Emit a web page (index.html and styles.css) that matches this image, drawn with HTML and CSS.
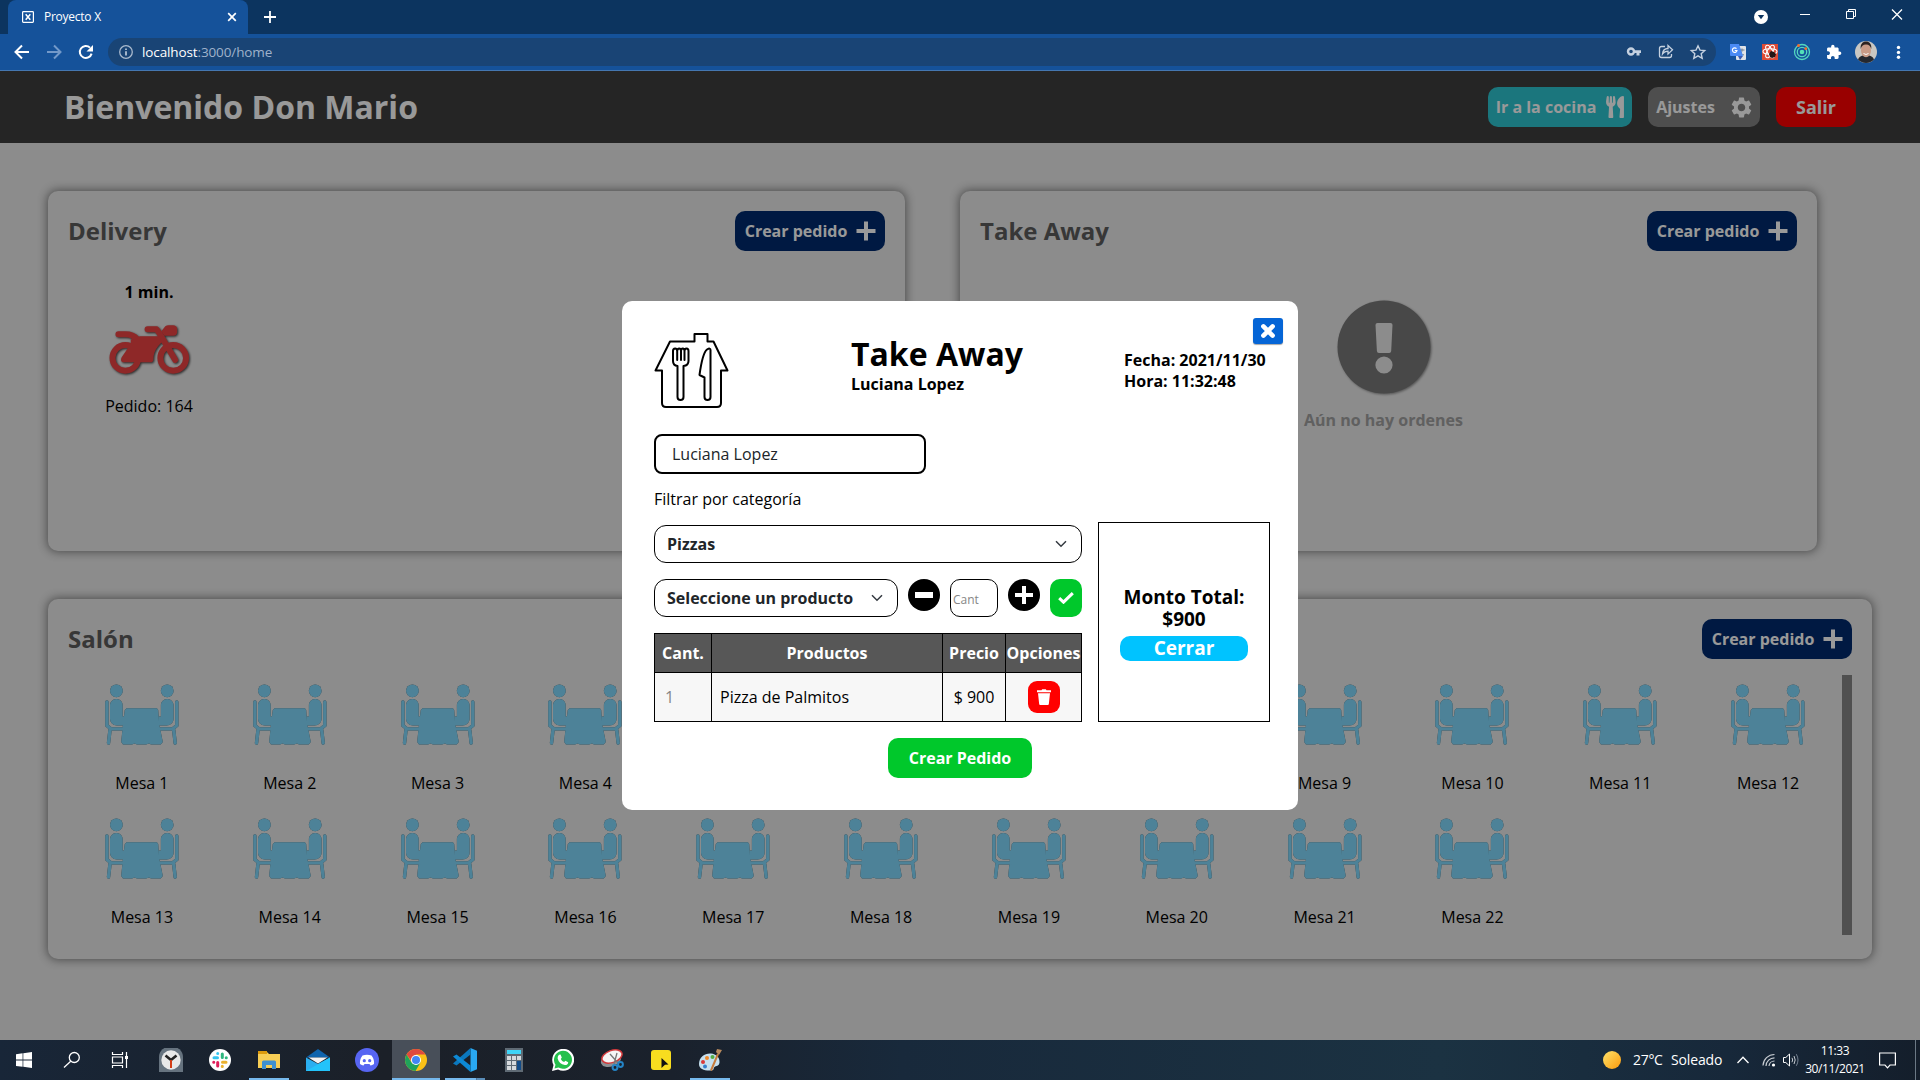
FILE: index.html
```html
<!DOCTYPE html>
<html lang="es">
<head>
<meta charset="utf-8">
<title>Proyecto X</title>
<link rel="stylesheet" href="styles.css">
</head>
<body>
<svg class="defs" width="0" height="0" aria-hidden="true">
  <symbol id="mesa" viewBox="0 0 74 62">
    <circle cx="11.4" cy="6.8" r="6.4"/><circle cx="62.2" cy="6.8" r="6.4"/>
    <path d="M11.4 15c-4 0-6.4 3-6.4 6.500v13c0 4 3 7 7 7h8v-9h-2.300V21.500c0-3.500-2.300-6.500-6.300-6.500zM62.200 15c4 0 6.400 3 6.400 6.500v13c0 4-3 7-7 7h-8v-9h2.300V21.500c0-3.500 2.300-6.500 6.300-6.500z"/>
    <path d="M21.500 24.300h30.400l1.300 1.700 1 14 3.600 18-2 2.500H46l-2-1-3 1h-9l-2.500-1-2.500 1h-9l-1.800-2.500 1.800-18 1.800-14z"/>
    <path class="chair" d="M1.900 18v23.500l4 3.400h12M5 46l-1.500 13M71.800 18v23.500l-4 3.400h-12M68.700 46l1.500 13"/>
  </symbol>
  <symbol id="mas" viewBox="0 0 20 20"><path d="M8 .5h4V8h7.500v4H12v7.500H8V12H.5V8H8z"/></symbol>
</svg>

<header class="browser">
  <div class="tabstrip">
    <div class="tab">
      <svg width="12" height="12" viewBox="0 0 12 12" fill="none" stroke="#fff"><rect x=".6" y=".6" width="10.800" height="10.800" rx=".8" stroke-width="1.200"/><path d="M3.700 3.200l4.600 5.600M8.300 3.200L3.700 8.800" stroke-width="1.500"/></svg>
      <span>Proyecto X</span>
      <svg width="10" height="10" viewBox="0 0 10 10" stroke="#fff" stroke-width="1.700"><path d="M1.200 1.200l7.600 7.600M8.800 1.200L1.200 8.800"/></svg>
    </div>
    <svg class="newtab" width="12" height="12" viewBox="0 0 12 12" stroke="#fff" stroke-width="1.800"><path d="M6 0v12M0 6h12"/></svg>
    <div class="wincontrols">
      <svg class="drop" width="14" height="14" viewBox="0 0 14 14"><circle cx="7" cy="7" r="7" fill="#fff"/><path d="M3.800 5h6.400L7 9.200z" fill="#0c345f"/></svg>
      <svg width="46" height="28" viewBox="0 0 46 28" stroke="#fff"><path d="M18 14.500h10"/></svg>
      <svg width="46" height="28" viewBox="0 0 46 28" stroke="#fff" fill="none"><path d="M18.500 11.500h7v7h-7zM20.500 11.500v-2h7v7h-2"/></svg>
      <svg width="46" height="28" viewBox="0 0 46 28" stroke="#fff" stroke-width="1.300"><path d="M18 9.500l10 10M28 9.500l-10 10"/></svg>
    </div>
  </div>
  <div class="toolbar">
    <div class="nav">
      <svg width="32" height="32" viewBox="0 0 32 32" fill="none" stroke="#fff" stroke-width="2"><path d="M23 16H10M16 9.500L9.500 16l6.500 6.500"/></svg>
      <svg width="32" height="32" viewBox="0 0 32 32" fill="none" stroke="#7399c9" stroke-width="2"><path d="M9 16h13M16 9.500l6.500 6.500-6.500 6.500"/></svg>
      <svg width="32" height="32" viewBox="0 0 32 32"><path d="M20 11.600a6 6 0 1 0 1.600 6" fill="none" stroke="#fff" stroke-width="2"/><path d="M23 9v6.500h-6.500z" fill="#fff"/></svg>
    </div>
    <div class="omnibox">
      <svg width="14" height="14" viewBox="0 0 14 14"><circle cx="7" cy="7" r="6.300" fill="none" stroke="#a9b9cd" stroke-width="1.300"/><path d="M6.200 6.200h1.600v4.300H6.200zM6.200 3.500h1.600v1.500H6.200z" fill="#c5d1e0"/></svg>
      <span class="url"><b>localhost</b>:3000/home</span>
      <div class="omniacts">
        <svg width="32" height="28" viewBox="0 0 32 28"><circle cx="13" cy="13.500" r="3" fill="none" stroke="#c5d1e0" stroke-width="2.400"/><path d="M16 12.200h7v2.800h-1.500v2.500h-3V15H16z" fill="#c5d1e0"/></svg>
        <svg width="32" height="28" viewBox="0 0 32 28" fill="none" stroke="#c5d1e0" stroke-width="1.300"><path d="M15 8.500h-3.500a2 2 0 0 0-2 2v7a2 2 0 0 0 2 2h8a2 2 0 0 0 2-2V16M12.500 16c.3-3.500 2.500-5.400 5.500-5.500V7.500l4.500 4.300-4.500 4.300v-3c-2.500 0-4 .7-5.500 2.900z"/></svg>
        <svg width="32" height="28" viewBox="0 0 32 28" fill="none" stroke="#c5d1e0" stroke-width="1.400"><path d="M16 7.800l2 4.300 4.700.5-3.500 3.100 1 4.600-4.200-2.400-4.200 2.400 1-4.600-3.500-3.100 4.700-.5z"/></svg>
      </div>
    </div>
    <div class="exts">
      <svg width="32" height="32" viewBox="0 0 32 32"><rect x="14" y="10" width="10" height="14" rx="1" fill="#dfe3e8"/><path d="M17.500 14h5M20 12.500V14c0 2-1 4-3 5M18 15.500c.5 1.500 2 3 4 3.500" stroke="#6b7d8e" fill="none"/><path d="M8 8h9l4 12H9a1 1 0 0 1-1-1z" fill="#4a8af4"/><path d="M16 20h5l-3 4z" fill="#3a5bb5"/><path d="M14.500 12.600a2.300 2.300 0 1 0 .5 1.900h-2.300" fill="none" stroke="#fff" stroke-width="1.200"/></svg>
      <svg width="32" height="32" viewBox="0 0 32 32"><rect x="8" y="8" width="16" height="16" fill="#de4b36"/><g fill="none" stroke="#fff" stroke-width="1.100"><ellipse cx="16" cy="15.500" rx="7" ry="2.700"/><ellipse cx="16" cy="15.500" rx="7" ry="2.700" transform="rotate(60 16 15.500)"/><ellipse cx="16" cy="15.500" rx="7" ry="2.700" transform="rotate(120 16 15.500)"/></g><path d="M15 18l2-3 3 1 2 2-1 3-3 1-2-1z" fill="#241515"/></svg>
      <svg width="32" height="32" viewBox="0 0 32 32" fill="none" stroke="#53d6c0" stroke-width="1.300"><circle cx="16" cy="16" r="7.500"/><circle cx="16" cy="16" r="4.700"/><circle cx="16" cy="16" r="2.300" fill="#53e0b8" stroke="none"/><circle cx="12.500" cy="9.500" r="1.500" fill="#f26b2c" stroke="none"/><circle cx="19.800" cy="12.700" r="1.400" fill="#f26b2c" stroke="none"/></svg>
      <svg width="32" height="32" viewBox="0 0 32 32"><path transform="translate(7.700 8) scale(.68)" fill="#fff" d="M20.500 11H19V7c0-1.100-.9-2-2-2h-4V3.500a2.500 2.500 0 0 0-5 0V5H4c-1.100 0-1.990.9-1.990 2v3.800H3.500c1.490 0 2.700 1.210 2.700 2.700s-1.210 2.700-2.700 2.700H2V20c0 1.100.9 2 2 2h3.800v-1.500c0-1.490 1.210-2.700 2.700-2.700s2.700 1.210 2.700 2.700V22H17c1.100 0 2-.9 2-2v-4h1.500a2.500 2.500 0 0 0 0-5z"/></svg>
      <svg width="32" height="32" viewBox="0 0 32 32"><circle cx="16" cy="16" r="11" fill="#c9c7c2"/><path d="M8 23.500c1-3 4-4.500 8-4.500s7 1.500 8 4.500a11 11 0 0 1-16 0z" fill="#25282e"/><ellipse cx="16" cy="14.500" rx="5" ry="6.800" fill="#c99b86"/><path d="M10.800 13c-.8-5 2-7.500 5.200-7.500s6 2.500 5.200 7.500c-.8-3-2-4.500-5.200-4.500s-4.400 1.500-5.200 4.500z" fill="#2c221f"/><path d="M13.500 17.500q2.500 2 5 0" stroke="#fff" fill="none"/></svg>
      <svg width="32" height="32" viewBox="0 0 32 32" fill="#fff"><circle cx="16.500" cy="11.400" r="1.700"/><circle cx="16.500" cy="16.400" r="1.700"/><circle cx="16.500" cy="21.300" r="1.700"/></svg>
    </div>
  </div>
</header>

<main class="page">
  <div class="topbar">
    <h1>Bienvenido Don Mario</h1>
    <button class="btn cocina"><span>Ir a la cocina</span><svg width="18" height="22" viewBox="0 0 416 512" fill="#fff"><path d="M207.900 15.200c.8 4.700 16.100 94.500 16.100 128.800 0 52.300-27.800 89.600-68.900 104.600L168 486.700c.7 13.700-10.200 25.300-24 25.300H80c-13.700 0-24.700-11.500-24-25.300l12.900-238.100C27.700 233.600 0 196.200 0 144 0 109.600 15.300 19.900 16.100 15.200 19.300-5.100 61.400-5.400 64 16.300v141.200c1.300 3.400 15.100 3.200 16 0 1.400-25.300 7.900-139.200 8-141.800 3.300-20.800 44.700-20.800 47.900 0 .2 2.700 6.600 116.500 8 141.800.9 3.200 14.800 3.400 16 0V16.300c2.600-21.600 44.800-21.400 48-1.100zm119.200 285.700l-15 185.100c-1.200 14 9.900 26 23.900 26h56c13.300 0 24-10.700 24-24V24c0-13.200-10.700-24-24-24-82.500 0-221.400 178.500-64.900 300.900z"/></svg></button>
    <button class="btn ajustes"><span>Ajustes</span><svg width="25" height="25" viewBox="0 0 24 24" fill="#fff"><path d="M19.140 12.940c.04-.3.060-.61.060-.94 0-.32-.02-.64-.07-.94l2.030-1.580a.49.49 0 0 0 .12-.61l-1.920-3.320a.488.488 0 0 0-.59-.22l-2.390.96c-.5-.38-1.030-.7-1.620-.94l-.36-2.540a.484.484 0 0 0-.48-.41h-3.840c-.24 0-.43.17-.47.41l-.36 2.540c-.59.24-1.130.57-1.620.94l-2.390-.96c-.22-.08-.47 0-.59.22L2.740 8.870c-.12.21-.08.47.12.61l2.030 1.580c-.05.3-.09.63-.09.94s.02.64.07.94l-2.030 1.580a.49.49 0 0 0-.12.61l1.920 3.320c.12.22.37.29.59.22l2.390-.96c.5.38 1.030.7 1.620.94l.36 2.540c.05.24.24.41.48.41h3.840c.24 0 .44-.17.47-.41l.36-2.540c.59-.24 1.130-.56 1.620-.94l2.390.96c.22.08.47 0 .59-.22l1.920-3.320c.12-.22.07-.47-.12-.61l-2.010-1.580zM12 15.600c-1.980 0-3.600-1.620-3.600-3.600s1.620-3.600 3.600-3.600 3.600 1.620 3.600 3.600-1.620 3.600-3.600 3.600z"/></svg></button>
    <button class="btn salir">Salir</button>
  </div>

  <div class="content">
    <div class="pair">
      <section class="card">
        <div class="cardhead"><h2>Delivery</h2><button class="btn crear"><span>Crear pedido</span><svg width="20" height="20"><use href="#mas"/></svg></button></div>
        <div class="orders">
          <div class="order">
            <strong>1 min.</strong>
            <svg class="moto" width="81" height="50" viewBox="0 0 82 50">
              <g fill="none" stroke="#ed4344" stroke-width="6"><circle cx="16.500" cy="33" r="13"/><circle cx="65" cy="33" r="13"/><path d="M9.500 9h7c6 0 9 1.500 12 5M39 4h9l3 4 16 27" stroke-linecap="round" stroke-linejoin="round"/></g>
              <path fill="#ed4344" d="M22 14h5l4-3h20l3 6c-5 4-9 10-9 17 0 2-1 3.500-3 3.500H15c-3 0-3.500-3-2-5.500l9-13zM53 6l4-5c1-.8 2-1 3-1h5c2 0 4 1.500 4 3.500V7c0 2-1.500 3.500-4 3.500h-9z"/>
            </svg>
            <span>Pedido: 164</span>
          </div>
        </div>
      </section>
      <section class="card">
        <div class="cardhead"><h2>Take Away</h2><button class="btn crear"><span>Crear pedido</span><svg width="20" height="20"><use href="#mas"/></svg></button></div>
        <div class="empty">
          <svg width="94" height="94" viewBox="0 0 94 94"><circle cx="47" cy="47" r="46.500" fill="#787878"/><path d="M40.500 23h13q2 0 2 2l-1.300 26q-.2 2-2 2H42q-2 0-2.100-2l-1.400-26q0-2 2-2z" fill="#e9e9e9"/><circle cx="47" cy="65" r="8.600" fill="#e9e9e9"/></svg>
          <strong>Aún no hay ordenes</strong>
        </div>
      </section>
    </div>
    <section class="card salon">
      <div class="cardhead"><h2>Salón</h2><button class="btn crear"><span>Crear pedido</span><svg width="20" height="20"><use href="#mas"/></svg></button></div>
      <div class="scroller">
        <div class="mesas">
          <div class="mesa"><svg><use href="#mesa"/></svg><span>Mesa 1</span></div>
          <div class="mesa"><svg><use href="#mesa"/></svg><span>Mesa 2</span></div>
          <div class="mesa"><svg><use href="#mesa"/></svg><span>Mesa 3</span></div>
          <div class="mesa"><svg><use href="#mesa"/></svg><span>Mesa 4</span></div>
          <div class="mesa"><svg><use href="#mesa"/></svg><span>Mesa 5</span></div>
          <div class="mesa"><svg><use href="#mesa"/></svg><span>Mesa 6</span></div>
          <div class="mesa"><svg><use href="#mesa"/></svg><span>Mesa 7</span></div>
          <div class="mesa"><svg><use href="#mesa"/></svg><span>Mesa 8</span></div>
          <div class="mesa"><svg><use href="#mesa"/></svg><span>Mesa 9</span></div>
          <div class="mesa"><svg><use href="#mesa"/></svg><span>Mesa 10</span></div>
          <div class="mesa"><svg><use href="#mesa"/></svg><span>Mesa 11</span></div>
          <div class="mesa"><svg><use href="#mesa"/></svg><span>Mesa 12</span></div>
          <div class="mesa"><svg><use href="#mesa"/></svg><span>Mesa 13</span></div>
          <div class="mesa"><svg><use href="#mesa"/></svg><span>Mesa 14</span></div>
          <div class="mesa"><svg><use href="#mesa"/></svg><span>Mesa 15</span></div>
          <div class="mesa"><svg><use href="#mesa"/></svg><span>Mesa 16</span></div>
          <div class="mesa"><svg><use href="#mesa"/></svg><span>Mesa 17</span></div>
          <div class="mesa"><svg><use href="#mesa"/></svg><span>Mesa 18</span></div>
          <div class="mesa"><svg><use href="#mesa"/></svg><span>Mesa 19</span></div>
          <div class="mesa"><svg><use href="#mesa"/></svg><span>Mesa 20</span></div>
          <div class="mesa"><svg><use href="#mesa"/></svg><span>Mesa 21</span></div>
          <div class="mesa"><svg><use href="#mesa"/></svg><span>Mesa 22</span></div>
        </div>
        <div class="track"></div>
      </div>
    </section>
  </div>

  <div class="overlay">
    <div class="modal">
      <button class="close"><svg width="16" height="16" viewBox="0 0 16 16" stroke="#fff" stroke-width="4.600" stroke-linecap="round"><path d="M3.400 3.400l9.200 9.200M12.600 3.400l-9.200 9.200"/></svg></button>
      <div class="mhead">
        <svg width="75" height="75" viewBox="0 0 75 75" fill="none" stroke="#000" stroke-width="2" stroke-linejoin="round"><path d="M1.500 37.500L16 8.500h24.500V1h13v7.500h6l14 29H67V70q0 4-4 4H12q-4 0-4-4V37.500z"/><path d="M23.500 33v31q0 3 3 3t3-3V33q5-.5 5-5V18q0-2.500-2-2.500T30.500 18v9-9q0-2.500-1.700-2.500T27 18v9-9q0-2.500-1.800-2.500T23.200 18v9-9q0-2.500-2.100-2.500T19 18v10q0 4.500 4.500 5zM56.500 17v47q0 3-3 3t-3-3V44.500L45.500 42q3-22 7.500-25.500 3.500-2 3.500.5z"/></svg>
        <div class="mtitle"><h3>Take Away</h3><strong>Luciana Lopez</strong></div>
        <div class="meta"><div>Fecha: 2021/11/30</div><div>Hora: 11:32:48</div></div>
      </div>
      <div class="nameinput">Luciana Lopez</div>
      <div class="label">Filtrar por categoría</div>
      <div class="mbody">
        <div class="left">
          <div class="select"><span>Pizzas</span><svg width="12" height="8" viewBox="0 0 12 8"><path d="M1 1.200l5 5 5-5"/></svg></div>
          <div class="row">
            <div class="select prod"><span>Seleccione un producto</span><svg width="12" height="8" viewBox="0 0 12 8"><path d="M1 1.200l5 5 5-5"/></svg></div>
            <svg class="circ" width="32" height="32" viewBox="0 0 32 32"><circle cx="16" cy="16" r="16"/><path d="M7 13h18v6H7z" fill="#fff"/></svg>
            <div class="cant">Cant</div>
            <svg class="circ" width="32" height="32" viewBox="0 0 32 32"><circle cx="16" cy="16" r="16"/><path d="M14 7h4v7h7v4h-7v7h-4v-7H7v-4h7z" fill="#fff"/></svg>
            <button class="ok"><svg width="16" height="12" viewBox="0 0 16 12" fill="none" stroke="#fff" stroke-width="3"><path d="M1.200 6.200l4.300 4L14.800 1.200"/></svg></button>
          </div>
          <table>
            <thead><tr><th class="c1">Cant.</th><th class="c2">Productos</th><th class="c3">Precio</th><th class="c4">Opciones</th></tr></thead>
            <tbody><tr><td class="qty">1</td><td>Pizza de Palmitos</td><td class="price">$ 900</td><td class="opt"><button class="del"><svg width="14" height="16" viewBox="0 0 14 16" fill="#fff"><path d="M0 1.300h4.500L5.200.2h3.600l.7 1.100H14v1.900H0zM1 4.200h12l-1.200 11q-.1.800-1 .8H3.200q-.9 0-1-.8z"/></svg></button></td></tr></tbody>
          </table>
        </div>
        <div class="total"><div>Monto Total:</div><div>$900</div><button>Cerrar</button></div>
      </div>
      <button class="btn submit">Crear Pedido</button>
    </div>
  </div>
</main>

<footer class="taskbar">
  <div class="apps">
    <div class="app"><svg width="16" height="16" viewBox="0 0 16 16" fill="#fff"><path d="M0 2.200L6.600 1.300v6.300H0zM7.300 1.200L16 0v7.600H7.300zM0 8.400h6.600v6.400L0 13.900zM7.300 8.400H16V16l-8.700-1.200z"/></svg></div>
    <div class="app search"><svg width="18" height="18" viewBox="0 0 18 18" fill="none" stroke="#fff" stroke-width="1.300"><circle cx="11.300" cy="6.500" r="5"/><path d="M7.700 10.300L1 16.500"/></svg></div>
    <div class="app views"><svg width="18" height="16" viewBox="0 0 18 16" fill="none" stroke="#fff" stroke-width="1.200"><path d="M1.500 0v2.500h10V0M1.500 16v-2.500h10V16M1.500 5h10v6h-10zM15.500 0v16"/><path d="M14 4h3v3h-3z" fill="#fff" stroke="none"/></svg></div>
    <div class="app"><svg width="24" height="24" viewBox="0 0 24 24"><path d="M0 9A10 9 0 0 1 24 9V24H0z" fill="#66737f"/><circle cx="12" cy="12" r="9.700" fill="#e8e8e8"/><path d="M12 12L6.500 7.500M12 12l5.500-4.500" stroke="#222" stroke-width="2.600"/><path d="M12 12v8" stroke="#d43d16" stroke-width="2"/></svg></div>
    <div class="app"><svg width="22" height="22" viewBox="0 0 22 22"><circle cx="11" cy="11" r="11" fill="#fff"/><g stroke-width="3" stroke-linecap="round"><path d="M5 8.700h3.500M8.700 4.500v.1" stroke="#36c5f0"/><path d="M13.300 5v3.500M17.200 8.700h.1" stroke="#2eb67d"/><path d="M13.500 13.300H17M13.300 17.300v.1" stroke="#ecb22e"/><path d="M8.700 13.500V17M4.700 13.300h.1" stroke="#e01e5a"/></g></svg></div>
    <div class="app run"><svg width="22" height="20" viewBox="0 0 22 20"><path d="M0 2h9l2 2h11v14H0z" fill="#f8ce55"/><path d="M0 1h9v3H0z" fill="#dd9b0d"/><path d="M4 19v-7q0-1.500 1.500-1.500h11Q18 10.500 18 12v7h-4v-4H8v4z" fill="#3f90d0"/></svg></div>
    <div class="app"><svg width="24" height="22" viewBox="0 0 24 22"><path d="M0 8.500L12 0l12 8.500z" fill="#0f64ad"/><path d="M0 8.500L12 15l12-6.500V22H0z" fill="#2aaef0"/><path d="M0 22L24 8.500V22z" fill="#23c3fa"/><path d="M2.500 8.500h19L12 14.500z" fill="#f2f2f2"/></svg></div>
    <div class="app"><svg width="24" height="24" viewBox="0 0 24 24"><circle cx="12" cy="12" r="12" fill="#5765f2"/><path d="M7.500 7.500q4.500-1.500 9 0 3 4 2.500 8.500-2 1.500-3.500 1.400l-1-1.400h-5l-1 1.400Q7 17.500 5 16q-.5-4.500 2.500-8.500z" fill="#fff"/><circle cx="9.300" cy="12.700" r="1.600" fill="#5765f2"/><circle cx="14.700" cy="12.700" r="1.600" fill="#5765f2"/></svg></div>
    <div class="app active"><svg width="22" height="22" viewBox="0 0 22 22"><circle cx="11" cy="11" r="11" fill="#fbc116"/><path d="M1.500 5.500A11 11 0 0 1 20.500 5.500H11L7 13z" fill="#e04a3f"/><path d="M1.500 5.500A11 11 0 0 0 10.500 22l5-8.500H6.500z" fill="#20a35b"/><circle cx="11" cy="11" r="5" fill="#fff"/><circle cx="11" cy="11" r="4" fill="#4286f5"/></svg></div>
    <div class="app run multi"><svg width="24" height="24" viewBox="0 0 24 24"><path d="M17.500 0L24 2.700v18.600L17.500 24z" fill="#29a8f2"/><path d="M17.500 0v6.500L3.500 17.500 0 15.500z" fill="#0b78be"/><path d="M0 8.500l3.500-2 14 11V24z" fill="#0d89d5"/></svg></div>
    <div class="app"><svg width="18" height="24" viewBox="0 0 18 24"><path d="M0 0h18v24H0z" fill="#5f6a74"/><path d="M2 2h14v4H2z" fill="#3fd5f7"/><path d="M2 8h4v4H2zM7 8h4v4H7zM12 8h4v4h-4zM2 13h4v4H2zM7 13h4v4H7zM2 18h4v4H2zM7 18h4v4H7z" fill="#d6dadd"/><path d="M12 13h4v9h-4z" fill="#124b87"/></svg></div>
    <div class="app"><svg width="22" height="22" viewBox="0 0 22 22"><path d="M0 22l1.500-6A11 11 0 1 1 6 20.500z" fill="#fff"/><path d="M2.500 19.500l1-3.700A9 9 0 1 1 6.500 18.600z" fill="#25c04c"/><path d="M7 5.800l1.500-.2 1.300 3-1 1.300q1 2.200 3.300 3.200l1.300-1.300 2.800 1.400q0 2.800-3.300 2.800-6-1-7.300-6.800 0-2.300 1.400-3.400z" fill="#fff"/></svg></div>
    <div class="app"><svg width="24" height="22" viewBox="0 0 24 22"><ellipse cx="11" cy="11" rx="10.500" ry="6.500" transform="rotate(-20 11 11)" fill="#8b8f93"/><ellipse cx="12" cy="7.500" rx="10.500" ry="6" transform="rotate(-20 12 7.500)" fill="#f5f5f5" stroke="#d2393b" stroke-width="1.500"/><path d="M10 5l8 9M17 4l-3 11" stroke="#777" stroke-width="1.300"/><g fill="none" stroke="#2484c6" stroke-width="2"><circle cx="15" cy="18.500" r="2.400"/><circle cx="20.500" cy="15.500" r="2.400"/></g></svg></div>
    <div class="app"><svg width="20" height="20" viewBox="0 0 20 20"><rect width="20" height="20" rx="3" fill="#f8dd1f"/><path d="M10.500 8l7 6.500-3.500.3-3.500 3.200z" fill="#111"/></svg></div>
    <div class="app run"><svg width="24" height="24" viewBox="0 0 24 24"><path d="M1 16C1 9 7 5 13 5.500c5 .5 9 4 8.500 9-.5 4-3.500 3-5 4.500s0 3-3 3.500C7 23 1 21.500 1 16z" fill="#c6e0ef"/><circle cx="5" cy="14" r="2" fill="#d93838"/><circle cx="9" cy="10" r="2" fill="#f08a2c"/><circle cx="14.500" cy="9" r="2" fill="#54ad45"/><circle cx="7" cy="18.500" r="2" fill="#377fcc"/><path d="M13 22.500L20 6" stroke="#c77b3b" stroke-width="2"/><path d="M18 4l1-3 5 1-3 5z" fill="#b98a5e"/></svg></div>
  </div>
  <div class="tray">
    <svg class="sun" width="18" height="18" viewBox="0 0 18 18"><defs><linearGradient id="g" x1="0" y1="0" x2="1" y2="1"><stop offset="0" stop-color="#ffe36b"/><stop offset="1" stop-color="#fb9a0b"/></linearGradient></defs><circle cx="9" cy="9" r="9" fill="url(#g)"/></svg>
    <span class="temp">27°C</span><span class="weather">Soleado</span>
    <svg width="12" height="8" viewBox="0 0 12 8" fill="none" stroke="#fff" stroke-width="1.300"><path d="M.5 7L6 1.200 11.500 7"/></svg>
    <svg class="wifi" width="14" height="14" viewBox="0 0 14 14" fill="none" stroke="#c7ccd2" stroke-width="1.200"><path d="M1 12.500A11.500 11.500 0 0 1 12.500 1.500M4 13A8.500 8.500 0 0 1 12.500 4.800M7 13A5.500 5.500 0 0 1 12.500 8"/><circle cx="11.500" cy="12" r="1.600" fill="#fff" stroke="none"/></svg>
    <svg class="vol" width="17" height="14" viewBox="0 0 17 14" fill="none" stroke="#fff"><path d="M.5 4.500h2.300L6.500 1v12L2.800 9.500H.5z"/><path d="M9 4.800q1.300 2.200 0 4.400M11 3q2.400 4 0 8" stroke="#c5cad0"/><path d="M13.300 1.200q3.400 5.800 0 11.600" stroke="#748191"/></svg>
    <div class="clock"><div>11:33</div><div>30/11/2021</div></div>
    <svg class="notif" width="17" height="17" viewBox="0 0 17 17" fill="none" stroke="#fff" stroke-width="1.200"><path d="M.6 1h15.800v12H11l-2.500 2.800L6 13H.6z"/></svg>
    <div class="peek"></div>
  </div>
</footer>
</body>
</html>
```
FILE: styles.css
```css
* { box-sizing: border-box; }
body {
  margin: 0; width: 1920px; height: 1080px; overflow: hidden;
  display: flex; flex-direction: column;
  font-family: "Open Sans", "Noto Sans", sans-serif; font-size: 16px; line-height: 24px; color: #000;
}
h1, h2, h3 { margin: 0; }
button { border: 0; padding: 0; font: inherit; color: inherit; display: flex; align-items: center; justify-content: center; }
svg { display: block; flex: none; }
.defs { position: absolute; }

/* Browser chrome */
.browser { height: 71px; background: #15529a; border-bottom: 1px solid #4577b0; color: #fff; font-family: "Open Sans", sans-serif; }
.tabstrip { height: 34px; background: #0c345f; padding-left: 8px; display: flex; align-items: center; }
.tab { width: 240px; height: 34px; padding: 0 11px 0 14px; background: #15529a; border-radius: 8px 8px 0 0; display: flex; align-items: center; gap: 10px; font-size: 12px; letter-spacing: -.25px; }
.tab span { flex: 1; }
.newtab { margin-left: 16px; }
.wincontrols { margin-left: auto; height: 34px; display: flex; align-items: flex-start; }
.drop { margin: 10px 14px 0 0; }
.toolbar { height: 36px; display: flex; align-items: center; }
.nav { display: flex; width: 108px; padding-left: 6px; }
.omnibox { width: 1608px; height: 28px; border-radius: 14px; background: #194475; display: flex; align-items: center; padding: 0 2px 0 11px; }
.url { margin-left: 9px; font-size: 13.500px; letter-spacing: -.12px; color: #9fb2cb; }
.url b { font-weight: 400; color: #fff; }
.omniacts { display: flex; margin-left: auto; }
.exts { display: flex; margin-left: 6px; }

/* Page */
.page { position: relative; height: 969px; background: #e9e9e9; }
.topbar { height: 72px; background: #3e3e3e; display: flex; align-items: center; padding: 0 64px; gap: 16px; color: #fff; }
.topbar h1 { flex: 1; font-size: 32px; line-height: 44px; font-weight: 700; }
.btn { height: 40px; border-radius: 10px; font-weight: 700; color: #fff; }
.cocina { width: 144px; background: #2dc5d1; gap: 10px; }
.ajustes { width: 112px; background: #838383; gap: 14px; padding-left: 2px; }
.salir { width: 80px; background: #f00; font-size: 18px; }
.content { padding: 48px; display: flex; flex-direction: column; gap: 48px; }
.pair { display: flex; gap: 55px; }
.card { width: 857px; height: 360px; padding: 20px; border-radius: 10px; background: #e9e9e9; box-shadow: 0 0 10px 1px rgba(0,0,0,.45); }
.salon { width: 1824px; }
.cardhead { display: flex; justify-content: space-between; height: 40px; align-items: center; }
.card h2 { font-size: 24px; color: #5d5d5d; font-weight: 700; }
.crear { width: 150px; background: #002b6e; gap: 9px; padding-left: 1px; fill: #fff; }
.orders { padding: 29px 0 0 27px; }
.order { width: 108px; display: flex; flex-direction: column; align-items: center; }
.order strong, .empty strong { font-weight: 700; }
.moto { margin: 21px 0 19px; filter: drop-shadow(1px 1px 1px rgba(0,0,0,.7)); }
.empty { width: 807px; display: flex; flex-direction: column; align-items: center; gap: 14px; padding-top: 49px; color: #a0a0a0; }
.empty svg { filter: drop-shadow(1px 1px 1px rgba(0,0,0,.4)); }
.scroller { display: flex; height: 260px; margin-top: 16px; }
.mesas { width: 1774px; display: grid; grid-template-columns: repeat(12, 1fr); grid-auto-rows: 134px; }
.mesa { display: flex; flex-direction: column; align-items: center; gap: 25px; padding-top: 9px; }
.mesa svg { width: 74px; height: 62px; fill: #80d9fd; filter: drop-shadow(0 0 .5px rgba(0,0,0,.6)); }
.chair { fill: none; stroke: #80d9fd; stroke-width: 3.400px; stroke-linecap: round; }
.track { width: 10px; background: #868686; }

/* Modal */
.overlay { position: absolute; inset: 0; background: rgba(0,0,0,.4); display: flex; justify-content: center; align-items: flex-start; padding-top: 230px; }
.modal { position: relative; width: 676px; height: 509px; background: #fff; border-radius: 10px; padding: 32px 28px 32px 32px; }
.close { position: absolute; top: 17px; right: 15px; width: 30px; height: 26px; border-radius: 3px; background: #0565d6; box-shadow: 0 1px 1px rgba(0,0,0,.35); }
.mhead { display: flex; height: 75px; font-weight: 700; }
.mtitle { margin-left: 122px; }
.mtitle h3 { font-size: 32px; line-height: 41px; font-weight: 700; }
.mtitle strong { display: block; line-height: 20px; font-weight: 700; }
.meta { width: 146px; margin-left: auto; padding-top: 17px; line-height: 21px; white-space: nowrap; }
.nameinput { margin-top: 26px; width: 272px; height: 40px; border: 2px solid #000; border-radius: 8px; padding: 6px 16px; color: #212529; }
.label { margin: 13px 0 11px; }
.mbody { display: flex; gap: 16px; height: 200px; }
.left { width: 428px; padding-top: 3px; display: flex; flex-direction: column; gap: 16px; }
.select { height: 38px; border: 1px solid #000; border-radius: 12px; display: flex; align-items: center; justify-content: space-between; padding: 0 14px 0 12px; font-weight: 700; color: #212529; white-space: nowrap; }
.select svg path { fill: none; stroke: #343a40; stroke-width: 1.500px; }
.row { display: flex; gap: 10px; }
.prod { width: 244px; }
.cant { width: 48px; height: 38px; border: 1px solid #000; border-radius: 10px; padding: 8px 0 0 2px; font-size: 12px; color: #868686; }
.ok { width: 32px; height: 38px; border-radius: 10px; background: #00c82b; }
table { width: 428px; height: 89px; table-layout: fixed; border-collapse: collapse; }
th, td { border: 1px solid #000; padding: 0; }
th { height: 39px; background: #575757; color: #fff; font-weight: 700; }
td { height: 49px; background: #f7f7f7; padding-left: 8px; }
.c1 { width: 57px; } .c2 { width: 231px; } .c3 { width: 63px; }
.qty { color: #868686; padding-left: 10px; }
.price { padding: 0; text-align: center; }
.opt { padding: 0; }
.del { width: 32px; height: 32px; margin: 0 auto; border-radius: 9px; background: #f00; }
.total { width: 172px; border: 1px solid #000; display: flex; flex-direction: column; align-items: center; padding-top: 63px; font-size: 19px; line-height: 22px; font-weight: 700; }
.total button { width: 128px; height: 25px; margin-top: 6px; padding-bottom: 1px; border-radius: 10px; background: #00c3ff; color: #fff; font-weight: 700; }
.submit { width: 144px; margin: 16px 0 0 234px; background: #00c82b; }

/* Taskbar */
.taskbar { height: 40px; display: flex; justify-content: space-between; background: linear-gradient(90deg, #182638, #1b2028 20%, #1a212c 35%, #18293b 47%, #1b3242 75%, #17283a 90%, #141e2b); color: #fff; }
.apps { display: flex; gap: 1px; }
.app { width: 48px; height: 40px; display: flex; align-items: center; justify-content: center; }
.search { padding-right: 3px; }
.views { padding-right: 4px; }
.run { background: linear-gradient(#76b9ed, #76b9ed) 4px 38px / 40px 2px no-repeat; }
.multi { background: linear-gradient(90deg, #76b9ed 31px, #41607c 31px, #5a8db8 32px) 4px 38px / 40px 2px no-repeat; }
.active { background: #484f59; border-bottom: 2px solid #76b9ed; padding-top: 2px; }
.tray { display: flex; align-items: center; font-size: 14px; }
.temp { margin-left: 12px; width: 38px; letter-spacing: -.3px; }
.weather { width: 66px; letter-spacing: -.15px; }
.wifi { margin-left: 13px; }
.vol { margin-left: 7px; }
.clock { width: 62px; margin-left: 4px; font-size: 12px; line-height: 18px; text-align: center; letter-spacing: -.4px; }
.notif { margin-left: 13px; }
.peek { width: 1px; height: 40px; margin: 0 4px 0 19px; background: #6b7885; }
```
